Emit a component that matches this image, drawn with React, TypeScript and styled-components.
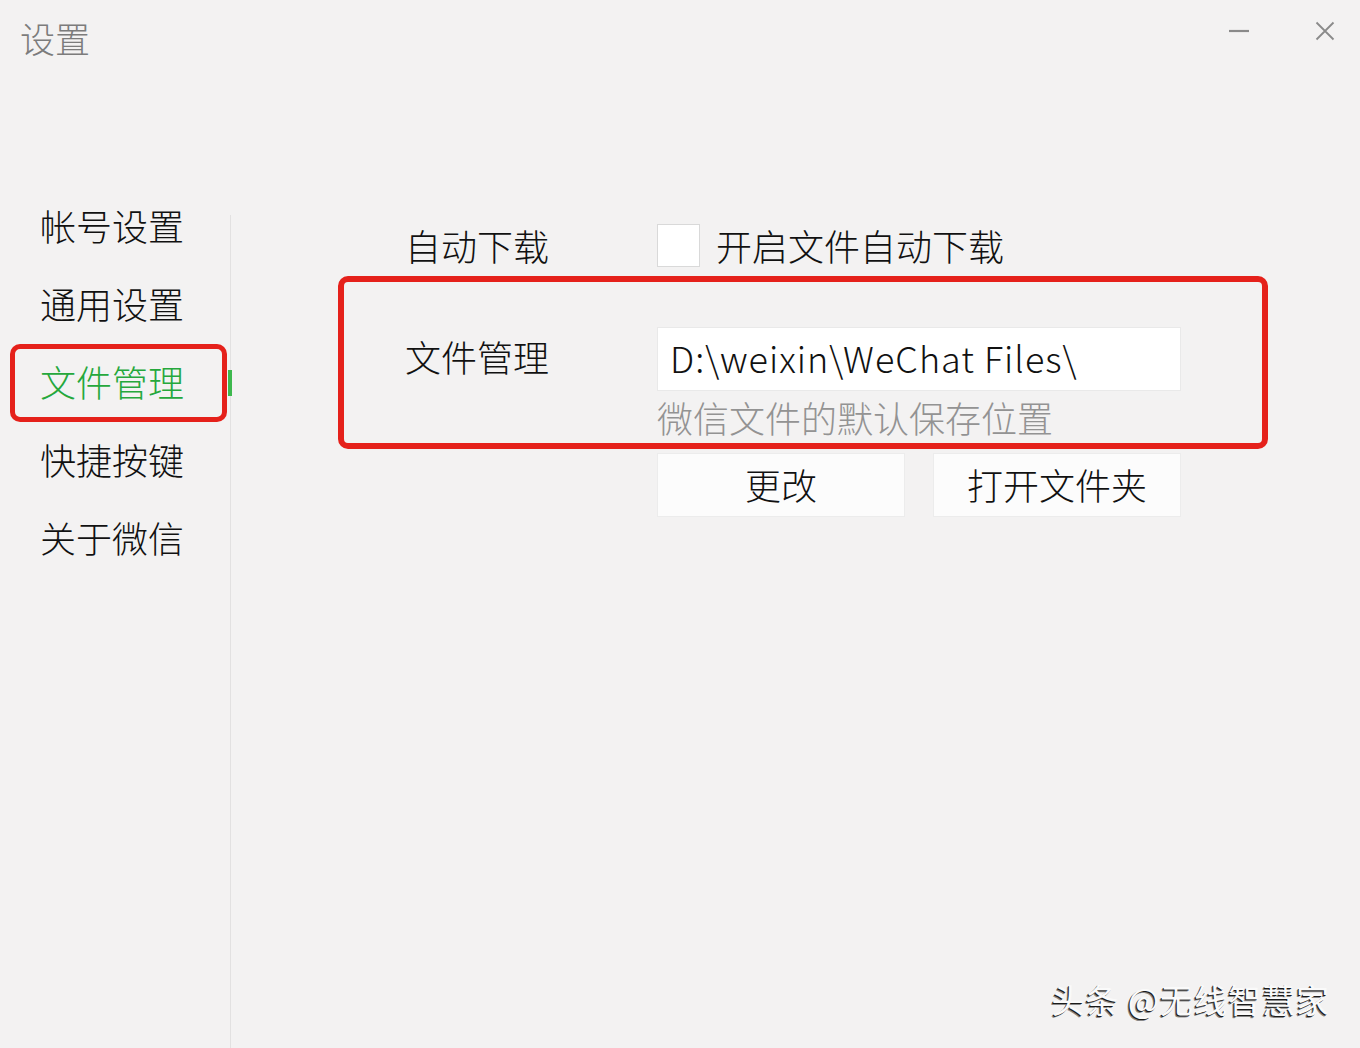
import React from "react";
import styled, { createGlobalStyle } from "styled-components";

const GlobalStyle = createGlobalStyle`
  html, body {
    margin: 0;
    padding: 0;
    overflow: hidden;
  }
  body {
    font-family: "Noto Sans CJK SC", "Noto Sans", sans-serif;
    font-weight: 300;
    background: #f3f2f2;
  }
`;

const Window = styled.div`
  position: relative;
  height: 100vh;
  display: flex;
  flex-direction: column;
  background: #f3f2f2;
  color: #111111;
`;

const TitleBar = styled.div`
  height: 188px;
  flex-shrink: 0;
  display: flex;
  align-items: flex-start;
  justify-content: space-between;
  padding: 0 15px 0 20px;
  box-sizing: border-box;
`;

const Title = styled.div`
  margin-top: 19px;
  font-size: 35px;
  line-height: 38px;
  color: #7c7c7c;
`;

const Controls = styled.div`
  display: flex;
  gap: 46px;
  margin-top: 11px;
`;

const ControlButton = styled.div`
  width: 40px;
  height: 40px;
  display: flex;
  align-items: center;
  justify-content: center;
  color: #8a8a8a;
`;

const Body = styled.div`
  flex: 1;
  display: flex;
  min-height: 0;
`;

const Sidebar = styled.nav`
  width: 230px;
  flex-shrink: 0;
  display: flex;
  flex-direction: column;
`;

const NavItem = styled.div<{ $active?: boolean }>`
  position: relative;
  margin-left: 10px;
  width: 217px;
  height: 78px;
  box-sizing: border-box;
  padding-left: 30px;
  font-size: 36px;
  line-height: 74px;
  color: ${(p) => (p.$active ? "#25a83c" : "#111111")};
  border-radius: 10px;
  box-shadow: ${(p) => (p.$active ? "inset 0 0 0 5px #e5211b" : "none")};

  &::after {
    content: "";
    display: ${(p) => (p.$active ? "block" : "none")};
    position: absolute;
    right: -5px;
    top: 26px;
    width: 4px;
    height: 26px;
    background: #3db84e;
  }
`;

const Divider = styled.div`
  width: 1px;
  flex-shrink: 0;
  margin-top: 27px;
  background: #e2e1e1;
`;

const Main = styled.main`
  flex: 1;
  padding: 36px 0 0 107px;
  display: flex;
  flex-direction: column;
`;

const Row = styled.div`
  display: flex;
  align-items: center;
  padding-left: 67px;
  height: 43px;
`;

const Label = styled.div`
  width: 252px;
  flex-shrink: 0;
  font-size: 36px;
  line-height: 43px;
`;

const Checkbox = styled.div`
  width: 43px;
  height: 43px;
  box-sizing: border-box;
  background: #ffffff;
  border: 1px solid #d9d9d9;
`;

const CheckText = styled.div`
  margin-left: 16px;
  font-size: 36px;
  line-height: 43px;
`;

const Marked = styled.div`
  margin-top: 9px;
  width: 930px;
  box-sizing: border-box;
  border: 6px solid #e5211b;
  border-radius: 10px;
  padding: 45px 0 8px 61px;
  display: grid;
  grid-template-columns: 252px 524px;
  align-items: center;
`;

const FieldLabel = styled.div`
  font-size: 36px;
  line-height: 58px;
  padding-bottom: 6px;
`;

const PathInput = styled.div`
  height: 64px;
  box-sizing: border-box;
  background: #ffffff;
  border: 1px solid #e9e9e9;
  padding-left: 12px;
  font-size: 36px;
  line-height: 58px;
  letter-spacing: 1px;
  white-space: nowrap;
`;

const Hint = styled.div`
  grid-column: 2;
  margin-top: 8px;
  font-size: 36px;
  line-height: 36px;
  color: #939393;
`;

const Buttons = styled.div`
  margin: 4px 0 0 319px;
  display: flex;
  gap: 28px;
`;

const Button = styled.div`
  width: 248px;
  height: 64px;
  box-sizing: border-box;
  background: #fcfcfc;
  border: 1px solid #ececec;
  font-size: 36px;
  line-height: 60px;
  text-align: center;
`;

const Watermark = styled.div`
  position: absolute;
  right: 30px;
  bottom: 31px;
  font-size: 33px;
  line-height: 36px;
  letter-spacing: 1px;
  font-weight: 400;
  color: #fafafa;
  text-shadow: -1px 1px 0 #1a1a1a, -2px 2px 0 rgba(0, 0, 0, 0.45);
`;

const navItems = ["帐号设置", "通用设置", "文件管理", "快捷按键", "关于微信"];

export default function App() {
  return (
    <Window>
      <GlobalStyle />
      <TitleBar>
        <Title>设置</Title>
        <Controls>
          <ControlButton>
            <svg width="22" height="4" viewBox="0 0 22 4">
              <line x1="1" y1="2" x2="21" y2="2" stroke="currentColor" strokeWidth="2.2" />
            </svg>
          </ControlButton>
          <ControlButton>
            <svg width="20" height="20" viewBox="0 0 20 20">
              <path d="M1.5 1.5 L18.5 18.5 M18.5 1.5 L1.5 18.5" stroke="currentColor" strokeWidth="1.8" fill="none" />
            </svg>
          </ControlButton>
        </Controls>
      </TitleBar>
      <Body>
        <Sidebar>
          {navItems.map((item) => (
            <NavItem key={item} $active={item === "文件管理"}>
              {item}
            </NavItem>
          ))}
        </Sidebar>
        <Divider />
        <Main>
          <Row>
            <Label>自动下载</Label>
            <Checkbox />
            <CheckText>开启文件自动下载</CheckText>
          </Row>
          <Marked>
            <FieldLabel>文件管理</FieldLabel>
            <PathInput>D:\weixin\WeChat Files\</PathInput>
            <Hint>微信文件的默认保存位置</Hint>
          </Marked>
          <Buttons>
            <Button>更改</Button>
            <Button>打开文件夹</Button>
          </Buttons>
        </Main>
      </Body>
      <Watermark>头条 @无线智慧家</Watermark>
    </Window>
  );
}
